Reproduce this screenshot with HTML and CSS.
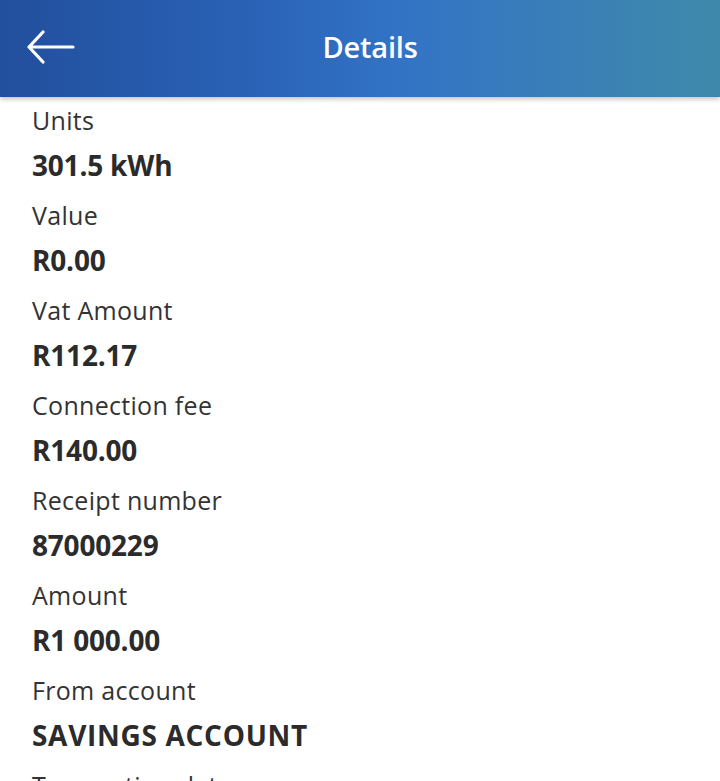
FILE: index.html
```html
<!DOCTYPE html>
<html>
<head>
<meta charset="utf-8">
<link rel="stylesheet" href="styles.css">
</head>
<body>
<header class="topbar">
  <button class="back" aria-label="Back">
    <svg width="48" height="34" viewBox="0 0 48 34"><path d="M46 17H2M16 2L2 17L16 32" fill="none" stroke="#fff" stroke-width="3.2" stroke-linecap="round" stroke-linejoin="round"/></svg>
  </button>
  <h1 class="title">Details</h1>
</header>
<main class="details">
  <div class="item"><div class="label">Units</div><div class="value">301.5 kWh</div></div>
  <div class="item"><div class="label">Value</div><div class="value">R0.00</div></div>
  <div class="item"><div class="label">Vat Amount</div><div class="value">R112.17</div></div>
  <div class="item"><div class="label">Connection fee</div><div class="value">R140.00</div></div>
  <div class="item"><div class="label">Receipt number</div><div class="value">87000229</div></div>
  <div class="item"><div class="label">Amount</div><div class="value">R1 000.00</div></div>
  <div class="item"><div class="label">From account</div><div class="value value-caps">SAVINGS ACCOUNT</div></div>
  <div class="item"><div class="label">Transaction date</div><div class="value">2023/01/01</div></div>
</main>
</body>
</html>
```
FILE: styles.css
```css
* { box-sizing: border-box; }
html, body { margin: 0; padding: 0; background: #fff; overflow: hidden; height: 781px; }
body { font-family: "Open Sans", "Noto Sans", sans-serif; }
.topbar {
  position: relative;
  height: 97px;
  display: flex;
  align-items: center;
  justify-content: center;
  background: linear-gradient(90deg, #224f9d 0%, #2a62b6 35%, #3273c6 55%, #3a7fb8 78%, #3e89aa 100%);
  box-shadow: 0 2px 5px rgba(0,0,0,0.25);
  z-index: 1;
}
.back {
  position: absolute;
  left: 27px;
  top: 30px;
  padding: 0;
  border: 0;
  background: none;
  display: flex;
}
.title {
  margin: 0 0 4px 20px;
  color: #fff;
  font-size: 29px;
  font-weight: 600;
  letter-spacing: -0.2px;
}
.details { padding: 1px 32px 0; }
.item { display: flex; flex-direction: column; }
.label {
  height: 45px;
  line-height: 45px;
  font-size: 25px;
  color: #333;
  letter-spacing: 0.3px;
}
.value {
  height: 50px;
  line-height: 45px;
  font-size: 28px;
  font-weight: 700;
  color: #2b2b2b;
  letter-spacing: -0.2px;
}
.value-caps { letter-spacing: 0.7px; }
```
